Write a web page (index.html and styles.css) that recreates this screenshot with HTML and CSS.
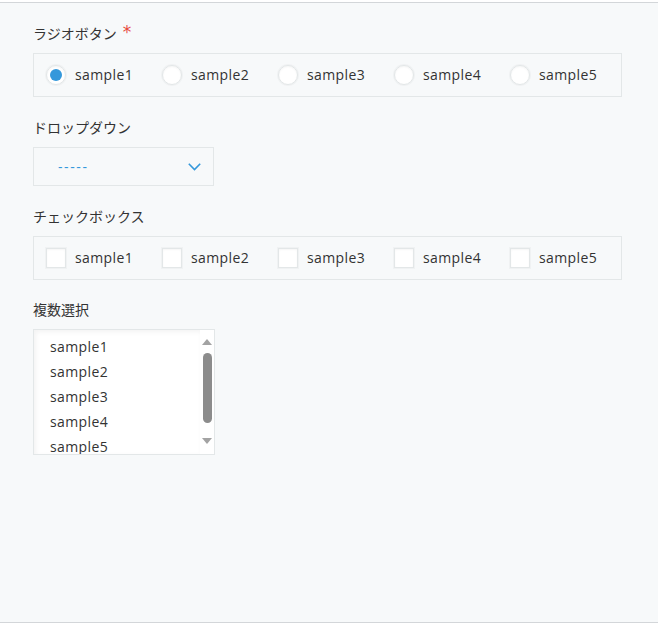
FILE: index.html
```html
<!DOCTYPE html>
<html lang="ja">
<head>
<meta charset="utf-8">
<link rel="stylesheet" href="styles.css">
</head>
<body>
<div class="page">
  <div class="field">
    <div class="label">ラジオボタン<span class="req">*</span></div>
    <div class="group">
      <label class="opt"><span class="radio checked"></span><span class="txt">sample1</span></label>
      <label class="opt"><span class="radio"></span><span class="txt">sample2</span></label>
      <label class="opt"><span class="radio"></span><span class="txt">sample3</span></label>
      <label class="opt"><span class="radio"></span><span class="txt">sample4</span></label>
      <label class="opt"><span class="radio"></span><span class="txt">sample5</span></label>
    </div>
  </div>
  <div class="field">
    <div class="label">ドロップダウン</div>
    <div class="dropdown">
      <span class="dd-value">-----</span>
      <svg class="chev" width="13" height="8" viewBox="0 0 13 8"><path d="M0.8 0.8 L6.5 6.5 L12.2 0.8" fill="none" stroke="#3498db" stroke-width="1.6"/></svg>
    </div>
  </div>
  <div class="field">
    <div class="label">チェックボックス</div>
    <div class="group">
      <label class="opt"><span class="check"></span><span class="txt">sample1</span></label>
      <label class="opt"><span class="check"></span><span class="txt">sample2</span></label>
      <label class="opt"><span class="check"></span><span class="txt">sample3</span></label>
      <label class="opt"><span class="check"></span><span class="txt">sample4</span></label>
      <label class="opt"><span class="check"></span><span class="txt">sample5</span></label>
    </div>
  </div>
  <div class="field">
    <div class="label">複数選択</div>
    <div class="listbox">
      <div class="items">
        <div class="item">sample1</div>
        <div class="item">sample2</div>
        <div class="item">sample3</div>
        <div class="item">sample4</div>
        <div class="item">sample5</div>
      </div>
      <div class="scrollbar">
        <span class="arrow-up"></span>
        <span class="thumb"></span>
        <span class="arrow-down"></span>
      </div>
    </div>
  </div>
</div>
</body>
</html>
```

FILE: styles.css
```css
html, body {
  margin: 0;
  padding: 0;
  background: #ffffff;
}
body {
  font-family: "Open Sans", "Noto Sans CJK JP", sans-serif;
  color: #333333;
  font-size: 14px;
}
.page {
  margin-top: 2px;
  height: 619px;
  box-sizing: border-box;
  height: 621px;
  border-top: 1px solid #d3d6d9;
  border-bottom: 1px solid #d3d6d9;
  background: #f7f9fa;
  padding: 20px 0 0 33px;
}
.field {
  margin-bottom: 20px;
}
.field:nth-child(2) {
  margin-bottom: 20px;
}
.field:nth-child(3) {
  margin-bottom: 19px;
}
.label {
  font-family: "Noto Sans CJK JP", sans-serif;
  font-size: 14px;
  line-height: 20px;
  height: 20px;
  margin-bottom: 10px;
  color: #333333;
  display: flex;
  align-items: flex-start;
}
.req {
  color: #e74c3c;
  font-family: "DejaVu Sans", sans-serif;
  font-size: 17px;
  line-height: 20px;
  margin-left: 6px;
  margin-top: -1px;
}
.group {
  box-sizing: border-box;
  width: 589px;
  height: 44px;
  border: 1px solid #e3e7e8;
  padding: 0 12px;
  display: flex;
  align-items: center;
}
.opt {
  display: flex;
  align-items: center;
  width: 116px;
  flex: none;
}
.opt:last-child {
  width: auto;
}
.radio {
  box-sizing: border-box;
  width: 20px;
  height: 20px;
  border-radius: 50%;
  background: #ffffff;
  border: 1px solid #e3e7e8;
  box-shadow: 0 0 0 1px #f0f2f3, inset 0 1px 2px rgba(0,0,0,0.04);
  position: relative;
  flex: none;
}
.radio.checked::after {
  content: "";
  position: absolute;
  left: 3px;
  top: 3px;
  width: 12px;
  height: 12px;
  border-radius: 50%;
  background: #3498db;
}
.check {
  box-sizing: border-box;
  width: 20px;
  height: 20px;
  background: #ffffff;
  border: 1px solid #e3e7e8;
  box-shadow: 0 0 0 1px #f0f2f3, inset 0 1px 2px rgba(0,0,0,0.04);
  flex: none;
}
.txt {
  margin-left: 9px;
  font-size: 14px;
  letter-spacing: 0.4px;
  color: #333333;
  line-height: 20px;
}
.dropdown {
  box-sizing: border-box;
  width: 181px;
  height: 39px;
  border: 1px solid #e3e7e8;
  display: flex;
  align-items: center;
  justify-content: space-between;
  padding: 0 12px 0 24px;
}
.dd-value {
  color: #3498db;
  letter-spacing: 1.6px;
  font-size: 14px;
  line-height: 20px;
}
.chev {
  display: block;
  margin-top: 1px;
}
.listbox {
  box-sizing: border-box;
  width: 182px;
  height: 126px;
  border: 1px solid #e3e7e8;
  background: #ffffff;
  display: flex;
  overflow: hidden;
}
.items {
  flex: 1;
  padding: 4px 0 0 16px;
  box-shadow: inset 2px 2px 5px rgba(0,0,0,0.05);
  overflow: hidden;
}
.item {
  line-height: 25px;
  height: 25px;
  font-size: 14px;
  letter-spacing: 0.4px;
  color: #333333;
}
.scrollbar {
  width: 14px;
  flex: none;
  display: flex;
  flex-direction: column;
  align-items: center;
  padding-top: 9px;
  box-sizing: border-box;
}
.arrow-up {
  width: 0;
  height: 0;
  border-left: 5px solid transparent;
  border-right: 5px solid transparent;
  border-bottom: 6px solid #a3a3a3;
}
.thumb {
  margin-top: 8px;
  width: 9px;
  height: 70px;
  border-radius: 5px;
  background: #8c8c8c;
}
.arrow-down {
  margin-top: 15px;
  width: 0;
  height: 0;
  border-left: 5px solid transparent;
  border-right: 5px solid transparent;
  border-top: 6px solid #a3a3a3;
}
```
